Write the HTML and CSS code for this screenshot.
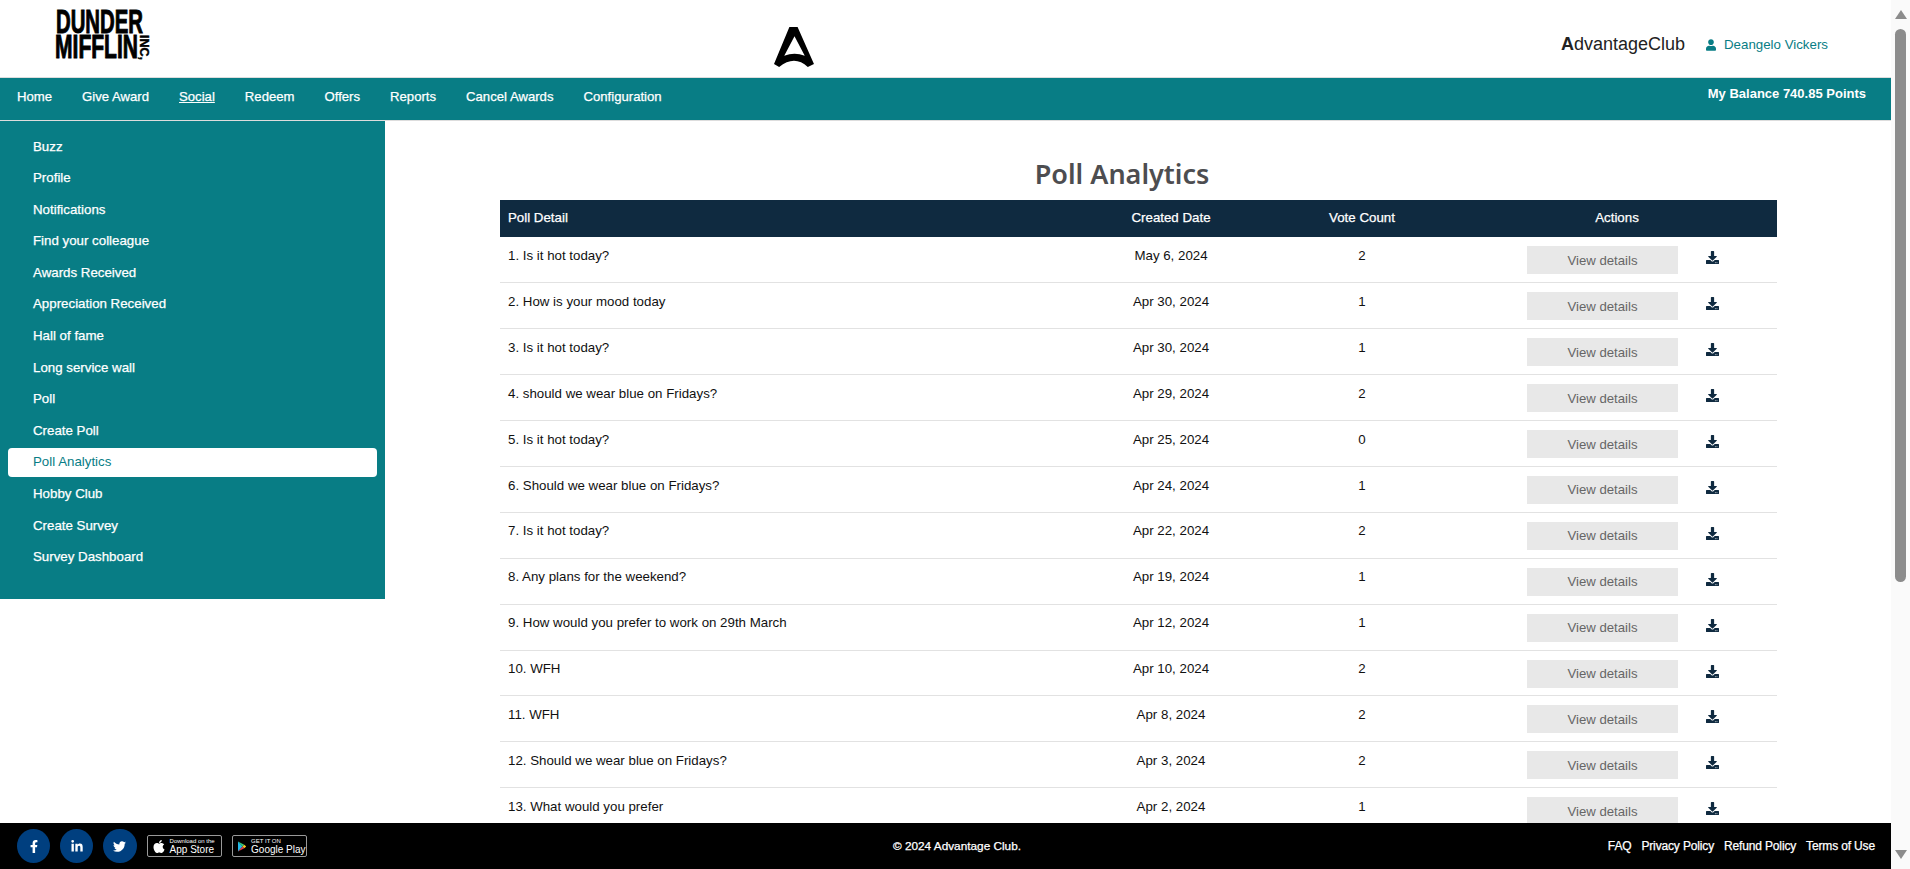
FILE: index.html
```html
<!DOCTYPE html>
<html lang="en">
<head>
    <meta charset="UTF-8">
    <title>Poll Analytics</title>
    <link rel="stylesheet" href="styles.css">
</head>
<body>
    <div class="app">
        <div class="page">
            <header class="top-bar">
                <svg class="company-logo" width="150" height="70" viewBox="0 0 150 70">
                    <text x="2" y="33" textLength="87" lengthAdjust="spacingAndGlyphs" class="logo-word">DUNDER</text>
                    <text x="1" y="58" textLength="83" lengthAdjust="spacingAndGlyphs" class="logo-word">MIFFLIN</text>
                    <text transform="translate(86 35) rotate(90)" textLength="25" lengthAdjust="spacingAndGlyphs" class="logo-inc">INC,</text>
                </svg>
                <svg class="brand-mark" width="41" height="41" viewBox="0 0 40 40">
                    <path fill-rule="evenodd" d="M0 36 L15 0 H23 L39 36 L33 39 Q20 27 5 39 Z M20 9 L10 28 Q20 24 30 28 Z"/>
                </svg>
                <div class="top-right">
                    <span class="club-name"><b>A</b>dvantageClub</span>
                    <span class="user-name">
                        <svg width="10" height="12" viewBox="0 0 448 512"><path fill="#087d85" d="M224 256c70.7 0 128-57.3 128-128S294.7 0 224 0 96 57.3 96 128s57.3 128 128 128zm89.6 32h-16.7c-22.2 10.2-46.9 16-72.9 16s-50.6-5.8-72.9-16h-16.7C60.2 288 0 348.2 0 422.4V464c0 26.5 21.5 48 48 48h352c26.5 0 48-21.5 48-48v-41.6c0-74.2-60.2-134.4-134.4-134.4z"/></svg>
                        Deangelo Vickers
                    </span>
                </div>
            </header>

            <nav class="main-nav">
                <a href="#">Home</a>
                <a href="#">Give Award</a>
                <a href="#" class="current">Social</a>
                <a href="#">Redeem</a>
                <a href="#">Offers</a>
                <a href="#">Reports</a>
                <a href="#">Cancel Awards</a>
                <a href="#">Configuration</a>
                <div class="balance">My Balance 740.85 Points</div>
            </nav>

            <div class="content">
                <aside class="sidebar">
                    <a href="#">Buzz</a>
                    <a href="#">Profile</a>
                    <a href="#">Notifications</a>
                    <a href="#">Find your colleague</a>
                    <a href="#">Awards Received</a>
                    <a href="#">Appreciation Received</a>
                    <a href="#">Hall of fame</a>
                    <a href="#">Long service wall</a>
                    <a href="#">Poll</a>
                    <a href="#">Create Poll</a>
                    <a href="#" class="active">Poll Analytics</a>
                    <a href="#">Hobby Club</a>
                    <a href="#">Create Survey</a>
                    <a href="#">Survey Dashboard</a>
                </aside>

                <main class="main">
                    <h1>Poll Analytics</h1>
                    <table class="poll-table">
                        <thead>
                            <tr>
                                <th class="col-detail">Poll Detail</th>
                                <th class="col-date">Created Date</th>
                                <th class="col-votes">Vote Count</th>
                                <th class="col-actions">Actions</th>
                            </tr>
                        </thead>
                        <tbody id="poll-rows"></tbody>
                    </table>
                </main>
            </div>

            <footer class="footer">
                <div class="footer-left">
                    <a href="#" class="social"><svg width="8" height="13" viewBox="0 0 320 512"><path fill="#fff" d="M279.14 288l14.22-92.66h-88.91v-60.13c0-25.35 12.42-50.06 52.24-50.06h40.42V6.26S260.43 0 225.36 0c-73.22 0-121.08 44.38-121.08 124.72v70.62H22.89V288h81.39v224h100.17V288z"/></svg></a>
                    <a href="#" class="social"><svg width="12" height="13" viewBox="0 0 448 512"><path fill="#fff" d="M100.28 448H7.4V148.9h92.88zM53.79 108.1C24.09 108.1 0 83.5 0 53.8a53.79 53.79 0 0 1 107.58 0c0 29.7-24.1 54.3-53.79 54.3zM447.9 448h-92.68V302.4c0-34.7-.7-79.2-48.29-79.2-48.29 0-55.69 37.7-55.69 76.7V448h-92.78V148.9h89.08v40.8h1.3c12.4-23.5 42.69-48.3 87.88-48.3 94 0 111.28 61.9 111.28 142.3V448z"/></svg></a>
                    <a href="#" class="social"><svg width="13" height="13" viewBox="0 0 512 512"><path fill="#fff" d="M459.37 151.716c.325 4.548.325 9.097.325 13.645 0 138.72-105.583 298.558-298.558 298.558-59.452 0-114.68-17.219-161.137-47.106 8.447.974 16.568 1.299 25.34 1.299 49.055 0 94.213-16.568 130.274-44.832-46.132-.975-84.792-31.188-98.112-72.772 6.498.974 12.995 1.624 19.818 1.624 9.421 0 18.843-1.3 27.614-3.573-48.081-9.747-84.143-51.98-84.143-102.985v-1.299c13.969 7.797 30.214 12.67 47.431 13.319-28.264-18.843-46.781-51.005-46.781-87.391 0-19.492 5.197-37.36 14.294-52.954 51.655 63.675 129.3 105.258 216.365 109.807-1.624-7.797-2.599-15.918-2.599-24.04 0-57.828 46.782-104.934 104.934-104.934 30.213 0 57.502 12.67 76.67 33.137 23.715-4.548 46.456-13.32 66.599-25.34-7.798 24.366-24.366 44.833-46.132 57.827 21.117-2.273 41.584-8.122 60.426-16.243-14.292 20.791-32.161 39.308-52.628 54.253z"/></svg></a>
                    <a href="#" class="store-badge">
                        <svg width="12" height="15" viewBox="0 0 384 512"><path fill="#fff" d="M318.7 268.7c-.2-36.7 16.4-64.4 50-84.8-18.8-26.9-47.2-41.7-84.7-44.6-35.5-2.8-74.3 20.7-88.5 20.7-15 0-49.4-19.7-76.4-19.7C63.3 141.2 4 184.8 4 273.5q0 39.3 14.4 81.2c12.8 36.7 59 126.7 107.2 125.2 25.2-.6 43-17.9 75.8-17.9 31.8 0 48.3 17.9 76.4 17.9 48.6-.7 90.4-82.5 102.6-119.3-65.2-30.7-61.7-90-61.7-91.9zm-56.6-164.2c27.3-32.4 24.8-61.9 24-72.5-24.1 1.4-52 16.4-67.9 34.9-17.5 19.8-27.8 44.3-25.6 71.9 26.1 2 49.9-11.4 69.5-34.3z"/></svg>
                        <span class="store-text"><small>Download on the</small>App Store</span>
                    </a>
                    <a href="#" class="store-badge">
                        <svg width="13" height="15" viewBox="0 0 13 15">
                            <polygon points="0,0 7,7.5 0,15" fill="#22b8e8"/>
                            <polygon points="0,0 9.5,5 7,7.5" fill="#37c978"/>
                            <polygon points="0,15 9.5,10 7,7.5" fill="#e8364a"/>
                            <polygon points="9.5,5 13,7.5 9.5,10 7,7.5" fill="#f9c525"/>
                        </svg>
                        <span class="store-text"><small>GET IT ON</small>Google Play</span>
                    </a>
                </div>
                <div class="copyright">© 2024 Advantage Club.</div>
                <div class="footer-links">
                    <a href="#">FAQ</a>
                    <a href="#">Privacy Policy</a>
                    <a href="#">Refund Policy</a>
                    <a href="#">Terms of Use</a>
                </div>
            </footer>
        </div>

        <div class="scrollbar">
            <div class="arrow-up"></div>
            <div class="thumb"></div>
            <div class="arrow-down"></div>
        </div>
    </div>

    <script>
        const polls = [
            ['Is it hot today?', 'May 6, 2024', 2],
            ['How is your mood today', 'Apr 30, 2024', 1],
            ['Is it hot today?', 'Apr 30, 2024', 1],
            ['should we wear blue on Fridays?', 'Apr 29, 2024', 2],
            ['Is it hot today?', 'Apr 25, 2024', 0],
            ['Should we wear blue on Fridays?', 'Apr 24, 2024', 1],
            ['Is it hot today?', 'Apr 22, 2024', 2],
            ['Any plans for the weekend?', 'Apr 19, 2024', 1],
            ['How would you prefer to work on 29th March', 'Apr 12, 2024', 1],
            ['WFH', 'Apr 10, 2024', 2],
            ['WFH', 'Apr 8, 2024', 2],
            ['Should we wear blue on Fridays?', 'Apr 3, 2024', 2],
            ['What would you prefer', 'Apr 2, 2024', 1]
        ];
        const downloadIcon = '<svg width="13" height="13" viewBox="0 0 512 512"><path fill="#0f2a40" d="M216 0h80c13.3 0 24 10.7 24 24v168h87.7c17.8 0 26.7 21.5 14.1 34.1L269.7 378.3c-7.5 7.5-19.8 7.5-27.3 0L90.1 226.1c-12.6-12.6-3.7-34.1 14.1-34.1H192V24c0-13.3 10.7-24 24-24zm296 376v112c0 13.3-10.7 24-24 24H24c-13.3 0-24-10.7-24-24V376c0-13.3 10.7-24 24-24h146.7l49 49c20.1 20.1 52.5 20.1 72.6 0l49-49H488c13.3 0 24 10.7 24 24zm-124 88c0-11-9-20-20-20s-20 9-20 20 9 20 20 20 20-9 20-20zm64 0c0-11-9-20-20-20s-20 9-20 20 9 20 20 20 20-9 20-20z"/></svg>';
        const rows = document.getElementById('poll-rows');

        polls.forEach((poll, i) => {
            const row = document.createElement('tr');
            row.innerHTML = '<td>' + (i + 1) + '. ' + poll[0] + '</td>'
                + '<td class="col-date">' + poll[1] + '</td>'
                + '<td class="col-votes">' + poll[2] + '</td>'
                + '<td class="col-buttons"><div class="actions"><button>View details</button><a href="#" class="download">' + downloadIcon + '</a></div></td>';
            rows.appendChild(row);
        });
    </script>
</body>
</html>
```

FILE: styles.css
```css
html, body {
    margin: 0;
    height: 869px;
    overflow: hidden;
}
body {
    font-family: "Liberation Sans", Arial, sans-serif;
    font-size: 13.3px;
    color: #111;
    background: #fff;
}
a {
    color: inherit;
    text-decoration: none;
}
.app {
    display: flex;
    height: 869px;
    position: relative;
}
.page {
    width: 1891px;
    overflow: hidden;
}

/* top bar */
.top-bar {
    height: 77px;
    display: flex;
    align-items: flex-start;
    border-bottom: 1px solid #ddd;
}
.company-logo {
    margin-left: 54px;
}
.logo-word {
    font-family: "Liberation Sans", sans-serif;
    font-weight: bold;
    font-size: 33px;
    stroke: #000;
    stroke-width: 1px;
}
.logo-inc {
    font-family: "Liberation Sans", sans-serif;
    font-weight: bold;
    font-size: 12px;
    stroke: #000;
    stroke-width: 0.4px;
}
.brand-mark {
    margin-left: 570px;
    margin-top: 27px;
}
.top-right {
    margin-left: auto;
    margin-right: 63px;
    margin-top: 34px;
    display: flex;
    align-items: center;
    gap: 21px;
}
.club-name {
    font-size: 18px;
    color: #222;
}
.user-name {
    color: #087d85;
    display: flex;
    align-items: center;
    gap: 8px;
}

/* main nav */
.main-nav {
    height: 43px;
    padding: 0 0 5px 2px;
    box-sizing: border-box;
    background: #087d85;
    display: flex;
    align-items: center;
    border-bottom: 1px solid #ddd;
    color: #fff;
    font-size: 13.15px;
    -webkit-text-stroke: 0.25px #fff;
}
.main-nav a {
    padding: 0 15px;
}
.main-nav a.current {
    text-decoration: underline;
}
.balance {
    margin-left: auto;
    margin-right: 25px;
    margin-top: -7px;
    font-size: 13px;
    font-weight: bold;
    -webkit-text-stroke: 0;
}

.content {
    display: flex;
    align-items: flex-start;
}

/* sidebar */
.sidebar {
    width: 385px;
    height: 478px;
    flex-shrink: 0;
    box-sizing: border-box;
    background: #087d85;
    padding: 11.5px 8px 0;
    display: flex;
    flex-direction: column;
    gap: 2.6px;
}
.sidebar a {
    height: 29px;
    line-height: 28.6px;
    padding-left: 25px;
    border-radius: 4px;
    color: #fff;
    -webkit-text-stroke: 0.25px #fff;
}
.sidebar a.active {
    background: #fff;
    color: #087d85;
    -webkit-text-stroke: 0;
}

/* poll table */
.main {
    flex: 1;
    padding-left: 115px;
}
.main h1 {
    margin: 31px 0 0;
    width: 1244px;
    height: 48px;
    line-height: 43px;
    text-align: center;
    font-family: "Noto Sans", sans-serif;
    font-size: 27px;
    font-weight: 600;
    color: #4d4d50;
}
.poll-table {
    width: 1277px;
    border-collapse: collapse;
    table-layout: fixed;
}
.poll-table th {
    height: 37px;
    padding: 0 0 2px;
    box-sizing: border-box;
    background: #0f2a40;
    color: #fff;
    font-weight: normal;
    -webkit-text-stroke: 0.25px #fff;
}
.poll-table th.col-detail {
    text-align: left;
    padding-left: 8px;
}
.col-date {
    width: 192px;
    text-align: center;
}
.col-votes {
    width: 190px;
    text-align: center;
}
.col-actions {
    width: 320px;
}
.poll-table td {
    height: 45.9px;
    padding: 10.6px 0 0;
    box-sizing: border-box;
    vertical-align: top;
    border-bottom: 1px solid #e2e2e2;
    line-height: 16px;
}
.poll-table td:first-child {
    padding-left: 8px;
}
.poll-table td.col-buttons {
    padding-top: 9px;
}
.actions {
    display: flex;
    align-items: flex-start;
    padding-left: 70px;
}
.actions button {
    width: 151px;
    height: 28px;
    padding: 0;
    border: none;
    background: #e8e8e8;
    color: #666;
    font-family: inherit;
    font-size: 13.2px;
}
.download {
    margin-left: 28px;
    margin-top: 5px;
}

/* footer */
.footer {
    position: absolute;
    left: 0;
    bottom: 0;
    width: 1891px;
    height: 46px;
    background: #000;
    color: #fff;
    display: grid;
    grid-template-columns: 1fr auto 1fr;
    align-items: center;
}
.footer-left {
    display: flex;
    align-items: center;
    padding-left: 17px;
    gap: 10px;
}
.social {
    width: 33.2px;
    height: 34px;
    border-radius: 50%;
    background: #003f7f;
    display: flex;
    align-items: center;
    justify-content: center;
}
.store-badge {
    width: 75px;
    height: 22px;
    box-sizing: border-box;
    border: 1px solid #999;
    border-radius: 2px;
    display: flex;
    align-items: center;
    gap: 5px;
    padding-left: 5px;
}
.store-text {
    display: flex;
    flex-direction: column;
    font-size: 10px;
    line-height: 10px;
    white-space: nowrap;
}
.store-text small {
    font-size: 6px;
    line-height: 7px;
}
.copyright {
    font-size: 11.8px;
    margin-left: 23px;
    -webkit-text-stroke: 0.25px #fff;
}
.footer-links {
    display: flex;
    justify-content: flex-end;
    gap: 10px;
    padding-right: 16px;
    font-size: 12px;
    letter-spacing: -0.15px;
    -webkit-text-stroke: 0.25px #fff;
}

/* scrollbar */
.scrollbar {
    width: 19px;
    height: 869px;
    background: #fafafa;
    display: flex;
    flex-direction: column;
    align-items: center;
}
.arrow-up {
    margin-top: 10px;
    border-left: 6px solid transparent;
    border-right: 6px solid transparent;
    border-bottom: 9px solid #8c8c8c;
}
.thumb {
    margin-top: 10px;
    width: 11px;
    height: 553px;
    border-radius: 6px;
    background: #8c8c8c;
}
.arrow-down {
    margin-top: auto;
    margin-bottom: 10px;
    border-left: 6px solid transparent;
    border-right: 6px solid transparent;
    border-top: 9px solid #8c8c8c;
}
```
